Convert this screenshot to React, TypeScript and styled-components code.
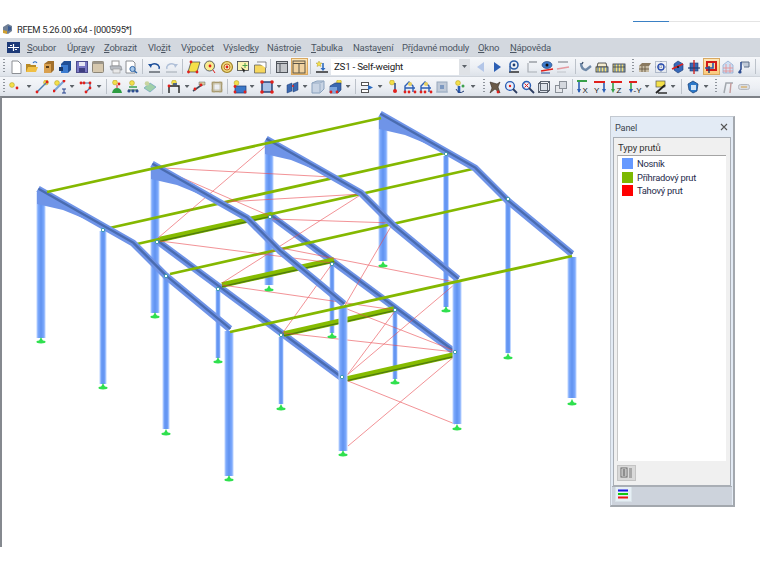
import React from "react";
import styled, { createGlobalStyle } from "styled-components";

const Global = createGlobalStyle`
  html, body { margin: 0; padding: 0; background: #fff; }
  body { font-family: Roboto, "Noto Sans", sans-serif; }
`;

const Page = styled.div`
  width: 760px;
  height: 570px;
  overflow: hidden;
  display: flex;
  flex-direction: column;
  background: #fff;
`;
const TopStrip = styled.div`
  height: 38px;
  padding-top: 21px;
  box-sizing: border-box;
`;
const LoadBar = styled.div`
  height: 1px;
  margin-left: 633px;
  background: linear-gradient(90deg, #3a80c4 0 36px, #e4e4e4 36px);
`;
const TitleRow = styled.div`
  display: flex;
  align-items: center;
  gap: 4px;
  height: 14px;
  padding-left: 2px;
`;
const TitleText = styled.span`
  font-size: 9.4px;
  letter-spacing: -0.32px;
  color: #2a2a2a;
  white-space: nowrap;
`;
const MenuBar = styled.div`
  height: 18px;
  display: flex;
  align-items: center;
  background: #d3d8df;
  padding-left: 7px;
`;
const LogoBox = styled.div`
  width: 20px;
  flex: none;
  display: flex;
  align-items: center;
`;
const MenuLabel = styled.span<{ $w: number }>`
  flex: none;
  width: ${(p) => p.$w}px;
  font-size: 9.5px;
  letter-spacing: -0.22px;
  color: #4c5663;
  white-space: nowrap;
  u { text-decoration: underline; text-underline-offset: 1px; }
`;
const Toolbar = styled.div`
  height: 20px;
  display: flex;
  align-items: center;
  background: linear-gradient(180deg, #f5f7fa 0%, #eceff4 55%, #dde2e9 100%);
  border-top: 1px solid #cfd4db;
  box-sizing: border-box;
`;
const Slot = styled.div<{ $w: number; $ml: number; $active?: boolean }>`
  flex: none;
  width: ${(p) => p.$w}px;
  height: 17px;
  margin-left: ${(p) => p.$ml}px;
  display: flex;
  align-items: center;
  justify-content: center;
  box-sizing: border-box;
  ${(p) => p.$active && `
    background: linear-gradient(180deg, #fde7b8, #fbc97c);
    border: 1px solid #d9a860;
  `}
`;
const Sep = styled.div<{ $ml: number }>`
  flex: none;
  width: 1px;
  height: 15px;
  margin-left: ${(p) => p.$ml}px;
  background: #bcc2ca;
`;
const Grip = styled.div<{ $ml: number }>`
  flex: none;
  width: 2px;
  height: 15px;
  margin-left: ${(p) => p.$ml}px;
  background: repeating-linear-gradient(180deg, #8f959d 0 1px, transparent 1px 3px);
`;
const Caret = styled.div<{ $ml: number }>`
  flex: none;
  width: 5px;
  height: 3px;
  margin-left: ${(p) => p.$ml}px;
  background: #5c6268;
  clip-path: polygon(0 0, 100% 0, 50% 100%);
`;
const Combo = styled.div<{ $ml: number }>`
  flex: none;
  width: 139px;
  height: 16px;
  margin-left: ${(p) => p.$ml}px;
  display: flex;
  align-items: center;
  justify-content: space-between;
  background: #fff;
  font-size: 9.8px;
  letter-spacing: -0.25px;
  color: #222;
  padding-left: 3px;
  box-sizing: border-box;
`;
const ComboButton = styled.div`
  width: 11px;
  height: 16px;
  background: #dfe2e6;
  display: flex;
  align-items: center;
  justify-content: center;
`;
const Canvas = styled.div`
  position: relative;
  height: 451px;
  border-top: 2px solid #7d8187;
  border-left: 2px solid #85898f;
  box-sizing: border-box;
`;
const Model = styled.svg`
  display: block;
  width: 758px;
  height: 449px;
`;
const Panel = styled.div`
  position: absolute;
  left: 608px;
  top: 18px;
  width: 125px;
  height: 391px;
  box-sizing: border-box;
  display: flex;
  flex-direction: column;
  background: #e3ebf5;
  border: 1px solid #c3c9d1;
  border-right: 2px solid #a3a8ae;
  border-bottom: 2px solid #a3a8ae;
  padding: 0 2px;
`;
const PanelHead = styled.div`
  height: 20px;
  flex: none;
  display: flex;
  align-items: center;
  justify-content: space-between;
  padding: 0 3px 0 2px;
  font-size: 9.2px;
  letter-spacing: -0.15px;
  color: #3c4650;
`;
const PanelBody = styled.div`
  flex: 1;
  display: flex;
  flex-direction: column;
  background: #f0f0f0;
  border: 1px solid #a9aeb5;
  padding: 3px 4px 0 3px;
`;
const GroupTitle = styled.div`
  font-size: 9.5px;
  letter-spacing: -0.15px;
  line-height: 14px;
  padding-left: 1px;
  color: #333;
`;
const List = styled.div`
  flex: 1;
  background: #fff;
  border-top: 1px solid #a4a4a4;
  border-left: 1px solid #c8c8c8;
  padding-top: 2px;
  display: flex;
  flex-direction: column;
  gap: 2.5px;
`;
const LegendRow = styled.div`
  height: 11px;
  display: flex;
  align-items: center;
  gap: 4px;
  padding-left: 4px;
  font-size: 9.4px;
  letter-spacing: -0.28px;
  color: #1f2c4c;
`;
const Swatch = styled.div<{ $c: string }>`
  width: 11px;
  height: 11px;
  background: ${(p) => p.$c};
`;
const PanelFoot = styled.div`
  height: 24px;
  flex: none;
  display: flex;
  align-items: center;
`;
const FootButton = styled.div`
  width: 19px;
  height: 16px;
  background: #d9d9d9;
  border: 1px solid #c4c4c4;
  box-sizing: border-box;
  display: flex;
  align-items: center;
  justify-content: center;
`;
const TabStrip = styled.div`
  height: 18px;
  flex: none;
  background: #cdd3dc;
  border-top: 1px solid #a9aeb5;
  margin: 0 -1px 0 -1px;
  padding-left: 3px;
`;
const Tab = styled.div`
  width: 17px;
  height: 15px;
  background: #e6eff5;
  border: 1px solid #d8e2e8;
  border-top: none;
  box-sizing: border-box;
  display: flex;
  align-items: center;
  justify-content: center;
`;

const S = {
  red: "#e0201c", dk: "#3b4048", blue: "#2f6cc0", lb: "#8fb4e6", yl: "#f4e04a", or: "#d99a2e",
  gr: "#4ba34a", gy: "#9aa0a8", lg: "#d6dade", tan: "#c9b69a", pk: "#e59aa0",
};
const dot = (x: number, y: number, c = S.red, r = 1.4) => <circle cx={x} cy={y} r={r} fill={c} />;
const yDot = (x: number, y: number) => <circle cx={x} cy={y} r={2.4} fill={S.yl} stroke="#b7a52c" strokeWidth=".6" />;

const ICONS: Record<string, React.ReactNode> = {
  doc: <path d="M3 1h6l3 3v9.5H3z" fill="#fff" stroke="#8c8f94" />,
  open: <><path d="M1 12V4h4l1 1h5v7z" fill="#b88a24" /><path d="M1 12l2-5h10l-2 5z" fill="#f0bf45" /><path d="M8 3q2-2.5 4 0" stroke={S.blue} fill="none" strokeWidth="1.2" /></>,
  boxO: <><path d="M2 4l4-3h6v9l-3 3H2z" fill="#a2702c" /><path d="M2 4h7v9H2z" fill="#d9a050" /><rect x="4" y="6" width="3" height="2" fill="#5a3a14" /></>,
  boxB: <><path d="M3 4l3-3h7v9l-3 3H3z" fill="#1f4f96" /><path d="M3 5h7v8H3z" fill="#3c7cd0" /><rect x="1" y="7" width="4" height="4" fill="#16396e" /></>,
  save: <><rect x="1.5" y="1.5" width="11" height="11" fill="#7a78c4" stroke="#4d4c8c" /><rect x="4" y="2" width="6" height="4" fill="#e8e8f4" /><rect x="4" y="8" width="6" height="4" fill="#3f3f80" /></>,
  tan: <><rect x="1.5" y="1.5" width="11" height="11" rx="1" fill="#d6c8ae" stroke="#8d8678" /><rect x="1.5" y="1.5" width="11" height="2.5" fill="#9c968a" /></>,
  print: <><rect x="3" y="1" width="7" height="5" fill="#fff" stroke="#999" /><path d="M1 6h11l1 4H2z" fill="#b8bcc2" stroke="#80848a" strokeWidth=".6" /><rect x="4" y="9" width="7" height="4" fill="#e9e9e9" stroke="#999" strokeWidth=".6" /></>,
  prev: <><path d="M2 1h7l2 2v10H2z" fill="#fff" stroke="#8c8f94" /><circle cx="8.5" cy="9" r="2.6" fill="#a8c8ea" stroke="#3268a8" /><path d="M10.5 11l2.5 2" stroke="#3268a8" strokeWidth="1.4" /></>,
  undo: <><path d="M3 6q3-4 8-1 2 2 1 4" fill="none" stroke="#1c4e9a" strokeWidth="1.5" /><path d="M1 4l4 0-1 4z" fill="#1c4e9a" /><path d="M2 12h11" stroke="#202830" /></>,
  redo: <><path d="M11 6q-3-4-8-1-2 2-1 4" fill="none" stroke="#b0c0d8" strokeWidth="1.5" /><path d="M13 4l-4 0 1 4z" fill="#b0c0d8" /><path d="M1 12h11" stroke="#a0a8b0" /></>,
  para: <><path d="M4 2h9l-3 10H1z" fill={S.yl} stroke={S.dk} strokeWidth=".7" />{dot(4, 2)}{dot(10, 12)}{dot(1.5, 12)}</>,
  bubble: <><circle cx="6.5" cy="6" r="5" fill="#f8ec90" stroke={S.dk} strokeWidth=".8" />{dot(7, 6)}<path d="M10 10l2 3" stroke={S.red} /></>,
  target: <><circle cx="7" cy="7" r="5.5" fill="#efd97a" stroke="#a08028" strokeWidth="1.2" /><circle cx="7" cy="7" r="3" fill="#f8f0c0" stroke="#c07028" />{dot(7, 7)}</>,
  cursor: <><rect x="1.5" y="1.5" width="11" height="9" fill="#fbf3b0" stroke={S.dk} strokeWidth=".8" /><path d="M9 3v5M6.5 5.5h5" stroke={S.gr} /><path d="M5 7l3 6 1-3z" fill="#222" /></>,
  folder: <><path d="M1.5 5h11v8h-11z" fill="#f6d75e" stroke="#555" strokeWidth=".7" /><path d="M4 2h9v6" fill="#fff" stroke="#555" strokeWidth=".7" /></>,
  win: <><rect x="1.5" y="1.5" width="11" height="11" fill="#c3c6ca" stroke="#50555c" /><path d="M1.5 3.5h11M5 3.5v9" stroke="#50555c" /></>,
  winA: <><rect x="1" y="1" width="12" height="12" fill="#f0d2a0" stroke="#5b5446" /><path d="M1 3.5h12M7 3.5v9.5" stroke="#5b5446" /></>,
  load: <><path d="M3 3l1-2 1 2 2 0-1.5 1.5.5 2-2-1-2 1 .5-2L1 3z" fill={S.yl} stroke="#a59030" strokeWidth=".4" /><path d="M8 3v7" stroke={S.blue} strokeWidth="1.6" /><path d="M5.5 8h5L8 11z" fill={S.blue} /><path d="M1 12h12" stroke="#202020" strokeWidth="1.4" /></>,
  arrL: <path d="M10 2v10L3 7z" fill="#b3c6e8" />,
  arrR: <path d="M4 2v10l7-5z" fill="#2c5fb4" />,
  eye: <><circle cx="7" cy="5" r="4" fill="none" stroke="#2f5fa8" strokeWidth="1.6" /><circle cx="7" cy="5" r="1.4" fill="#1c3c70" /><path d="M2 12h10" stroke="#202020" strokeWidth="1.4" /><path d="M3 6v6" stroke="#2f5fa8" strokeWidth="1.4" /></>,
  xxx: <><path d="M4 3v9h9" fill="none" stroke="#a8adb4" strokeWidth="1.2" /><path d="M5 1h8v2H5z" fill="#b0b4ba" /></>,
  eyeR: <><ellipse cx="7" cy="5" rx="5" ry="3.5" fill="#3a78c8" stroke="#1c3c70" strokeWidth=".6" /><circle cx="7" cy="5" r="1.5" fill="#111" /><path d="M1 11l12-2" stroke={S.red} strokeWidth="1.4" /><path d="M1 13h9" stroke="#2c4c90" /></>,
  xxxR: <><path d="M2 1h10v2H2z" fill="#b0b4ba" /><path d="M1 9l12-2" stroke={S.pk} strokeWidth="1.6" /><path d="M1 12h9" stroke="#c0c4ca" /></>,
  hook: <><path d="M2 3q0 6 5 7l5-4" fill="none" stroke="#6f89a8" strokeWidth="2.4" /><path d="M3 4l1-2" stroke="#41536c" strokeWidth="1.4" /></>,
  bars: <><path d="M2 7l1-4h8l1 4z" fill="#f4ecd0" stroke="#333" strokeWidth=".8" /><rect x="1" y="7" width="12" height="5" fill="#f6e07a" stroke="#333" strokeWidth=".8" /><path d="M3 7v5M6 7v5M9 7v5M12 7v5" stroke="#2c5fb4" /></>,
  bars2: <><rect x="1" y="4" width="12" height="8" fill="#f6e07a" stroke="#333" strokeWidth=".8" /><path d="M3 4v8M6 4v8M9 4v8M12 4v8" stroke="#2c5fb4" /><path d="M1 7h12" stroke="#333" strokeWidth=".7" /></>,
  slab: <><path d="M1 6l3-3h9l-2 3z" fill="#8a7a60" /><rect x="1" y="6" width="10" height="6" fill="#c8bca4" /><path d="M1 9h10M4 6v6M7 6v6" stroke="#5c4e3a" strokeWidth=".8" /></>,
  dgrid: <><rect x="1.5" y="1.5" width="11" height="11" fill="none" stroke="#7a8aa4" strokeDasharray="1 1" /><path d="M7 1v12M1 7h12" stroke="#7a8aa4" strokeDasharray="1 1" /><circle cx="7" cy="7" r="3" fill="none" stroke="#2c4fb0" strokeWidth="1.4" /></>,
  cubeB: <><path d="M3 4l4-3 5 3v6l-5 3-4-3z" fill="#3768b8" stroke="#1d3b72" strokeWidth=".6" /><path d="M1 9l11-5" stroke={S.red} strokeWidth="1.5" />{dot(7, 7, "#111", 1)}</>,
  cubeC: <><rect x="3" y="3" width="8" height="8" fill="#3768b8" stroke="#1d3b72" strokeWidth=".6" /><path d="M7 0v14" stroke="#d02828" strokeWidth="1.4" /><path d="M1 8h12" stroke="#1d3b72" strokeWidth="1.2" /></>,
  cubeA: <><rect x="3" y="2" width="9" height="8" fill="none" stroke="#d01818" strokeWidth="2" /><path d="M1 8h8v-5" fill="none" stroke="#2a58b0" strokeWidth="1.6" /><path d="M5 13V6" stroke="#1d3b72" strokeWidth="1.4" /></>,
  bldg: <><path d="M2 13V5l5-4 5 4v8z" fill="#cfe0f4" stroke="#88a4cc" strokeWidth=".7" /><path d="M2 8h10M2 11h10M5 4v9M9 4v9" stroke="#e88c8c" strokeWidth=".8" /></>,
  flag: <><path d="M4 2h8v5H7" fill="#c0cad8" stroke="#5c6e88" /><path d="M4 2v7l-2 4" fill="none" stroke="#2c4c90" strokeWidth="1.6" />{dot(3, 12, "#2c4c90", 1.6)}</>,
  nodeP: <>{yDot(4, 5)}{dot(9, 8)}</>,
  line: <>{yDot(11, 2.5)}<path d="M11 3L2 12" stroke="#4d7fb0" strokeWidth="1.4" />{dot(2, 12)}{dot(12, 2)}</>,
  lineI: <>{yDot(4, 3)}<path d="M11 1L1 11" stroke="#7ca6d8" strokeWidth="2.2" />{dot(11, 1)}{dot(1, 11)}<path d="M9 9h4M11 9v4M9 13h4" stroke="#24408c" /></>,
  poly: <><path d="M2 3h9v5l-4 4" fill="none" stroke="#4d6fa0" strokeWidth="1.2" />{dot(2, 3)}{dot(11, 3)}{dot(11, 8)}{dot(7, 12)}{dot(5, 3)}</>,
  green: <>{yDot(5, 2.5)}<path d="M7 5v3" stroke={S.red} /><path d="M2 13q1-5 5-5t5 5z" fill="#2e9c42" />{dot(9, 4)}</>,
  tree: <>{yDot(6, 3)}<path d="M2 10h10" stroke="#2e6a38" /><path d="M3 7h8" stroke="#2e9c42" strokeWidth="1.4" />{dot(3, 11, "#2c4c90", 1.6)}{dot(7, 11, "#2c4c90", 1.6)}{dot(11, 11, "#2c4c90", 1.6)}</>,
  pale: <><path d="M1 8l6-5 6 4-6 5z" fill="#9fd0a8" stroke="#6ea0c0" strokeWidth=".7" /><circle cx="4" cy="3.5" r="2.3" fill="#c8d4a0" /></>,
  frameY: <>{yDot(7, 2.5)}<path d="M2 13V6h10v7" fill="none" stroke="#222" strokeWidth="1.4" /><path d="M6 4l4 0" stroke="#2c4c90" strokeWidth="1.6" />{dot(2, 6)}</>,
  diag: <><path d="M1 11L11 4" stroke="#3c4a5c" strokeWidth="1.6" /><path d="M7 2h6v3H7z" fill="#d8cda0" stroke="#666" strokeWidth=".5" />{dot(3, 9)}{dot(9, 5)}</>,
  rectT: <><rect x="2.5" y="2.5" width="9" height="9" fill="none" stroke="#a89a70" strokeWidth="1.6" /><path d="M1 4h12M1 10h12M4 1v12M10 1v12" stroke="#b8b08c" strokeWidth=".6" /></>,
  mem: <>{yDot(3.5, 3)}<rect x="2" y="6" width="11" height="7" fill="#3a78c8" stroke="#1d3b72" strokeWidth=".7" />{dot(2, 12)}{dot(12, 12)}{dot(2, 6.5)}</>,
  frameR: <><rect x="2" y="2" width="10" height="10" fill="#a8c0e4" stroke="#1d3b72" strokeWidth="1.4" />{dot(2, 2, S.red, 1.8)}{dot(12, 2, S.red, 1.8)}{dot(2, 12, S.red, 1.8)}{dot(12, 12, S.red, 1.8)}</>,
  rods: <><path d="M2 5l5-2v8l-5 2z" fill="#3a68b0" stroke="#1d3b72" strokeWidth=".5" /><path d="M8 4l5-2v8l-5 2z" fill="#3a68b0" stroke="#1d3b72" strokeWidth=".5" /><path d="M7 6l2 0" stroke={S.red} strokeWidth="1.6" /></>,
  glass: <><path d="M1 3l5-2h7v8l-4 4H1z" fill="#c8d4e4" stroke="#88a0bc" /><path d="M9 13V4M1 3h8l4-2" fill="none" stroke="#98acc4" /></>,
  solid: <>{yDot(10, 2)}<path d="M1 6l5-3h6v7l-3 3H1z" fill="#3a68b0" stroke="#1d3b72" strokeWidth=".6" /><rect x="1" y="7" width="7" height="6" fill="#7aa4dc" />{dot(2, 12)}{dot(8, 12)}</>,
  pipe: <><rect x="1.5" y="2.5" width="7" height="3" fill="#fff" stroke="#555" /><rect x="1.5" y="9.5" width="7" height="3" fill="#fff" stroke="#555" /><path d="M8 5l5 2.5L8 10z" fill="#2c6cc0" /></>,
  pinR: <>{yDot(5, 2.5)}<path d="M8 3v7" stroke="#203c78" strokeWidth="1.4" />{dot(8, 11, S.red, 2)}</>,
  struct: <><path d="M2 12V6l4-4 4 4v6M2 8h10" fill="none" stroke="#2c5fb4" strokeWidth="1.4" />{dot(2, 12)}{dot(6, 12)}{dot(12, 12)}<circle cx="7" cy="4" r="2" fill="#e8d060" /></>,
  structP: <><rect x="2" y="2" width="10" height="10" fill="#c0cad8" stroke="#98a8bc" /><rect x="5" y="5" width="4" height="4" fill="#7c98c0" /><path d="M1 12h12" stroke="#a8b8cc" /></>,
  weigh: <>{yDot(5, 3)}<path d="M6 13V6" stroke="#2c5fb4" strokeWidth="2.6" /><path d="M3 9q3 6 8 2" fill="none" stroke="#203c78" /><circle cx="10" cy="6" r="1.5" fill="#3ca04c" /></>,
  anim: <><path d="M3 2l7 2 3-2-2 5 2 6-5-4-5 4 2-5z" fill="#6a5a48" stroke="#362c22" strokeWidth=".6" />{dot(11, 12)}</>,
  mag: <><circle cx="6" cy="6" r="4.4" fill="#e8eefa" stroke="#2c5fb4" strokeWidth="1.4" />{dot(6, 6, S.red, 1.2)}<path d="M9 9l4 4" stroke="#2c3c60" strokeWidth="1.8" /></>,
  magX: <><circle cx="5.5" cy="5.5" r="4" fill="#e8eefa" stroke="#2c5fb4" strokeWidth="1.4" /><path d="M3.5 3.5l4 4M7.5 3.5l-4 4" stroke={S.red} /><path d="M8 8l5 5" stroke="#2c3c60" strokeWidth="1.8" /></>,
  cage: <><rect x="1.5" y="3.5" width="9" height="9" fill="#dce2ea" stroke="#5c6470" /><rect x="3.5" y="1.5" width="9" height="9" fill="none" stroke="#5c6470" /><path d="M1.5 3.5l2-2M10.5 3.5l2-2M1.5 12.5l2-2M10.5 12.5l2-2" stroke="#5c6470" /></>,
  boxes: <><rect x="1.5" y="5.5" width="7" height="7" fill="#e6e8ec" stroke="#8a9098" /><rect x="5.5" y="1.5" width="7" height="7" fill="#d4d8de" stroke="#8a9098" /></>,
  axX: <><path d="M1 1h10" stroke="#38a048" strokeWidth="2" /><path d="M3 2v10" stroke="#2c5fb4" strokeWidth="1.6" /><path d="M1 9l2 4 2-4z" fill="#2c5fb4" /><text x="6.5" y="12.5" fontSize="8" fontFamily="Liberation Sans" fill="#222">X</text></>,
  axY: <><path d="M1 2h11" stroke={S.red} strokeWidth="2" /><path d="M11 3v8" stroke="#2c5fb4" strokeWidth="1.6" /><path d="M9 9l2 4 2-4z" fill="#2c5fb4" /><text x="1" y="12.5" fontSize="8" fontFamily="Liberation Sans" fill="#222">Y</text></>,
  axZ: <><path d="M1 2h11" stroke={S.red} strokeWidth="2" /><path d="M3 3v8" stroke="#38a048" strokeWidth="1.6" /><path d="M1 9l2 4 2-4z" fill="#38a048" /><text x="6.5" y="12.5" fontSize="8" fontFamily="Liberation Sans" fill="#222">Z</text></>,
  axMY: <><path d="M1 2h8" stroke={S.red} strokeWidth="2" /><path d="M3 3v8" stroke="#38a048" strokeWidth="1.6" /><path d="M1 9l2 4 2-4z" fill="#2c5fb4" /><text x="5.5" y="12.5" fontSize="8" fontFamily="Liberation Sans" fill="#222">-Y</text></>,
  ray: <><rect x="2" y="1" width="9" height="6" fill={S.yl} stroke="#555" strokeWidth=".7" /><path d="M2 13L11 5" stroke="#222" strokeWidth="1.8" /><path d="M4 13h9" stroke="#222" strokeWidth="1.4" /></>,
  shape: <><path d="M2 4l5-3 5 3-1 7-4 2-4-3z" fill="#2c78c8" stroke="#123a70" strokeWidth=".7" /><path d="M5 5h5v5H5z" fill="#d2e4f6" /></>,
  gam: <><path d="M3 13l2-10h7" fill="none" stroke="#a2a8ae" strokeWidth="1.5" /><path d="M10 3l-1 10" stroke="#c49a9a" strokeWidth="1.4" /></>,
  pill: <><rect x="1.5" y="4.5" width="11" height="5" rx="2" fill="#d8dce2" stroke="#b4b8c0" /><path d="M4 7h6" stroke="#d8b070" strokeWidth="1.4" /></>,
};

type Item =
  | { k: "b"; x: number; i: string; a?: boolean }
  | { k: "c"; x: number }
  | { k: "s"; x: number }
  | { k: "g"; x: number }
  | { k: "combo"; x: number };

const b = (x: number, i: string, a?: boolean): Item => ({ k: "b", x, i, a });
const c = (x: number): Item => ({ k: "c", x });
const s = (x: number): Item => ({ k: "s", x });
const g = (x: number): Item => ({ k: "g", x });

const ROW1: Item[] = [
  g(3), b(16, "doc"), b(32, "open"), b(49, "boxO"), b(65, "boxB"), b(82, "save"), b(98, "tan"), b(116, "print"), b(131, "prev"),
  s(142), b(154, "undo"), b(172, "redo"), s(182), b(194, "para"), b(210, "bubble"), b(227, "target"), b(243, "cursor"), b(260, "folder"),
  s(270), b(282, "win"), b(299, "winA", true), s(310), b(322, "load"), { k: "combo", x: 331 },
  b(481, "arrL"), b(497, "arrR"), b(514, "eye"), b(531, "xxx"), b(547, "eyeR"), b(563, "xxxR"), s(575),
  b(586, "hook"), b(602, "bars"), b(619, "bars2"), g(632), b(645, "slab"), b(661, "dgrid"), b(678, "cubeB"), b(694, "cubeC"),
  b(711, "cubeA", true), b(728, "bldg"), b(744, "flag"), s(755),
];
const ROW2: Item[] = [
  g(3), b(15, "nodeP"), c(29), b(42, "line"), b(60, "lineI"), c(72), b(86, "poly"), c(99), s(106), b(117, "green"), b(133, "tree"), b(150, "pale"),
  s(162), b(174, "frameY"), c(187), b(199, "diag"), b(217, "rectT"), s(227), b(240, "mem"), c(252), b(267, "frameR"), c(279), b(292, "rods"), c(305),
  b(318, "glass"), b(336, "solid"), c(348), s(355), b(367, "pipe"), c(380), b(394, "pinR"), b(410, "struct"), b(426, "struct"), b(442, "structP"), b(460, "weigh"), c(473),
  g(483), b(494, "anim"), b(511, "mag"), b(528, "magX"), b(544, "cage"), b(561, "boxes"), s(572), b(583, "axX"), b(600, "axY"), b(617, "axZ"), b(635, "axMY"), c(647),
  b(661, "ray"), c(673), s(681), b(693, "shape"), c(706), g(715), b(728, "gam"), b(744, "pill"),
];

function Bar({ items }: { items: Item[] }) {
  let end = 0;
  const out: React.ReactNode[] = [];
  items.forEach((it, n) => {
    if (it.k === "b") {
      const w = it.a ? 17 : 14;
      const ml = it.x - w / 2 - end;
      end = it.x + w / 2;
      out.push(
        <Slot key={n} $w={w} $ml={ml} $active={it.a}>
          <svg width="14" height="14" viewBox="0 0 14 14">{ICONS[it.i]}</svg>
        </Slot>
      );
    } else if (it.k === "c") {
      out.push(<Caret key={n} $ml={it.x - 2.5 - end} />);
      end = it.x + 2.5;
    } else if (it.k === "s") {
      out.push(<Sep key={n} $ml={it.x - end} />);
      end = it.x + 1;
    } else if (it.k === "g") {
      out.push(<Grip key={n} $ml={it.x - end} />);
      end = it.x + 2;
    } else {
      out.push(
        <Combo key={n} $ml={it.x - end}>
          ZS1 - Self-weight
          <ComboButton><Caret $ml={0} /></ComboButton>
        </Combo>
      );
      end = it.x + 139;
    }
  });
  return <Toolbar>{out}</Toolbar>;
}

const MENU: [React.ReactNode, number][] = [
  [<><u>S</u>oubor</>, 40],
  [<>Úpr<u>a</u>vy</>, 37],
  [<><u>Z</u>obrazit</>, 44],
  [<>Vlo<u>ž</u>it</>, 33],
  [<>V<u>ý</u>počet</>, 42],
  [<>Výsled<u>k</u>y</>, 44],
  [<>Nástroje</>, 44],
  [<><u>T</u>abulka</>, 42],
  [<>Nasta<u>v</u>ení</>, 49],
  [<>Př<u>í</u>davné moduly</>, 76],
  [<><u>O</u>kno</>, 32],
  [<><u>N</u>ápověda</>, 44],
];

// model geometry, in page coordinates
type P = [number, number];
const rafter = (x: number, y: number): P[] => [[x - 3, y - 2], [x + 92, y + 52], [x + 125, y + 85], [x + 189, y + 138]];
const FRAMES: P[] = [[41, 190], [155, 165], [269, 140], [383, 115]];
// [x, top, bottom, width]
const BACK_COLS: [number, number, number, number][] = [
  [383, 118, 260, 9], [269, 143, 284, 9], [155, 168, 312, 9], [446, 155, 306, 6], [508, 199, 352, 6],
  [332, 263, 332, 5], [395, 310, 378, 5], [218, 289, 357, 5], [281, 336, 403, 5], [41, 192, 337, 9],
  [103, 230, 383, 7], [166, 276, 428, 7],
];
const FRONT_COLS: [number, number, number, number][] = [
  [229, 330, 475, 9], [343, 306, 450, 9], [457, 279, 423, 9], [572, 256, 397, 9],
];
const SUPPORTS: P[] = [
  [41, 340], [103, 386], [155, 315], [166, 432], [218, 360], [229, 478], [269, 288], [281, 407], [332, 335],
  [343, 453], [383, 264], [395, 381], [446, 309], [457, 427], [508, 356], [572, 402],
];
const LOWER_RAFTERS: [P, P][] = [[[156, 239], [342, 377]], [[270, 214], [456, 352]]];
const THIN_BEAMS_BACK: [P, P][] = [[[105, 228], [445, 152]], [[137, 243], [477, 167]], [[170, 273], [508, 197]]];
const THIN_BEAMS_FRONT: [P, P][] = [[[47, 191], [381, 117]], [[230, 331], [572, 255]]];
const THICK: [P, P][] = [[[160, 238.5], [272, 213.5]], [[222, 284], [334, 259]], [[284, 333], [394, 308]], [[347, 378], [458, 353]]];
const TIES: [P, P][] = [
  [[268, 143], [158, 237]], [[163, 167], [332, 176]], [[155, 165], [272, 216]], [[225, 201], [362, 193]],
  [[362, 193], [222, 282]], [[272, 218], [393, 222]], [[160, 240], [332, 262]], [[276, 246], [455, 281]],
  [[222, 284], [395, 309]], [[393, 222], [344, 306]], [[455, 283], [346, 375]], [[395, 310], [348, 373]],
  [[347, 308], [455, 350]], [[284, 332], [455, 351]], [[332, 263], [282, 333]], [[348, 380], [455, 423]], [[348, 445], [455, 355]],
];
const NODES: P[] = [[103, 229], [157, 241], [166, 275], [218, 288], [270, 216], [281, 334], [332, 263], [395, 309], [342, 376], [455, 351], [446, 153], [508, 198]];

const pts = (a: P[]) => a.map((p) => p.join(",")).join(" ");
const Seg = ({ a, ...r }: { a: [P, P] } & React.SVGProps<SVGLineElement>) => (
  <line x1={a[0][0]} y1={a[0][1]} x2={a[1][0]} y2={a[1][1]} {...r} />
);
const Column = ({ c: [x, t, bt, w] }: { c: [number, number, number, number] }) => (
  <g>
    <rect x={x - w / 2} y={t} width={w} height={bt - t} fill="#bcd4ff" />
    <rect x={x - w / 2 + 1} y={t} width={w - 2} height={bt - t} fill="#78a6fb" />
    <rect x={x - 1.5} y={t} width={3} height={bt - t} fill="#6596f2" />
  </g>
);
const Rafter = ({ p }: { p: P[] }) => (
  <g fill="none" strokeLinejoin="round">
    <polyline points={pts(p)} stroke="#6f94e8" strokeWidth="7" />
    <polyline points={pts(p.map(([x, y]) => [x + 0.4, y - 0.2] as P))} stroke="#4a6cb0" strokeWidth="2.4" />
  </g>
);
const Haunch = ({ x, y }: { x: number; y: number }) => (
  <polygon points={`${x - 4},${y} ${x - 4},${y + 13} ${x + 22},${y + 19} ${x + 44},${y + 28} ${x + 22},${y + 12}`} fill="#6f94e8" />
);

function ModelView() {
  return (
    <Model viewBox="2 97 758 449">
      {BACK_COLS.map((k, i) => <Column key={i} c={k} />)}
      {LOWER_RAFTERS.map((r, i) => <Rafter key={i} p={r} />)}
      <g stroke="#84b800" strokeWidth="2.8">
        {THIN_BEAMS_BACK.map((a, i) => <Seg key={i} a={a} />)}
      </g>
      {THICK.map((a, i) => (
        <g key={i}>
          <Seg a={a} stroke="#86bc00" strokeWidth="5.5" />
          <Seg a={[[a[0][0], a[0][1] + 1.6], [a[1][0], a[1][1] + 1.6]]} stroke="#4f7a10" strokeWidth="1.4" />
        </g>
      ))}
      <g stroke="#ea4a50" strokeWidth="0.8" opacity="0.75">
        {TIES.map((a, i) => <Seg key={i} a={a} />)}
      </g>
      {FRAMES.map(([x, y], i) => (
        <g key={i}>
          <Haunch x={x} y={y} />
          <Rafter p={rafter(x, y)} />
        </g>
      ))}
      {FRONT_COLS.map((k, i) => <Column key={i} c={k} />)}
      <g stroke="#84b800" strokeWidth="2.8">
        {THIN_BEAMS_FRONT.map((a, i) => <Seg key={i} a={a} />)}
      </g>
      {NODES.map(([x, y], i) => <circle key={i} cx={x} cy={y} r="1.7" fill="#fff" stroke="#1f8f9a" strokeWidth="0.8" />)}
      {SUPPORTS.map(([x, y], i) => (
        <g key={i} fill="#2fe04e">
          <polygon points={`${x},${y - 4} ${x + 2},${y} ${x - 2},${y}`} />
          <ellipse cx={x} cy={y + 0.8} rx="4.6" ry="1.6" />
        </g>
      ))}
    </Model>
  );
}

export default function App() {
  return (
    <Page>
      <Global />
      <TopStrip>
        <LoadBar />
        <TitleRow>
          <svg width="11" height="12" viewBox="0 0 11 12">
            <path d="M1 4l5-3 4 2v5l-4 3-5-2z" fill="#6f7f96" />
            <path d="M1 7l4 1v3l-4-1z" fill="#d0a030" />
            <path d="M6 3l3 1v3l-3 1z" fill="#3a5c94" />
          </svg>
          <TitleText>RFEM 5.26.00 x64 - [000595*]</TitleText>
        </TitleRow>
      </TopStrip>
      <MenuBar>
        <LogoBox>
          <svg width="13" height="11" viewBox="0 0 13 11">
            <rect width="13" height="11" fill="#1d3a78" />
            <path d="M1 5.5h11M6.5 2v7M3 3.5h2M8 7.5h2" stroke="#fff" strokeWidth="1.2" />
          </svg>
        </LogoBox>
        {MENU.map(([t, w], i) => <MenuLabel key={i} $w={w}>{t}</MenuLabel>)}
      </MenuBar>
      <Bar items={ROW1} />
      <Bar items={ROW2} />
      <Canvas>
        <ModelView />
        <Panel>
          <PanelHead>
            Panel
            <svg width="8" height="8" viewBox="0 0 8 8"><path d="M1 1l6 6M7 1L1 7" stroke="#555" strokeWidth="1.1" /></svg>
          </PanelHead>
          <PanelBody>
            <GroupTitle>Typy prutů</GroupTitle>
            <List>
              <LegendRow><Swatch $c="#6699ff" />Nosník</LegendRow>
              <LegendRow><Swatch $c="#7cb800" />Příhradový prut</LegendRow>
              <LegendRow><Swatch $c="#ff0000" />Tahový prut</LegendRow>
            </List>
            <PanelFoot>
              <FootButton>
                <svg width="13" height="12" viewBox="0 0 13 12">
                  <rect x="1" y="1" width="6" height="9" fill="#f0f0f0" stroke="#666" />
                  <rect x="2.5" y="2" width="3" height="7" fill="#8d8d8d" />
                  <path d="M9 1h3v10H9z" fill="#a8a8a8" />
                </svg>
              </FootButton>
            </PanelFoot>
          </PanelBody>
          <TabStrip>
            <Tab>
              <svg width="11" height="11" viewBox="0 0 11 11">
                <rect y="0.5" width="10" height="2" fill="#1414e0" />
                <rect y="4" width="10" height="2" fill="#10c810" />
                <rect y="7.5" width="10" height="2" fill="#f01414" />
              </svg>
            </Tab>
          </TabStrip>
        </Panel>
      </Canvas>
    </Page>
  );
}
